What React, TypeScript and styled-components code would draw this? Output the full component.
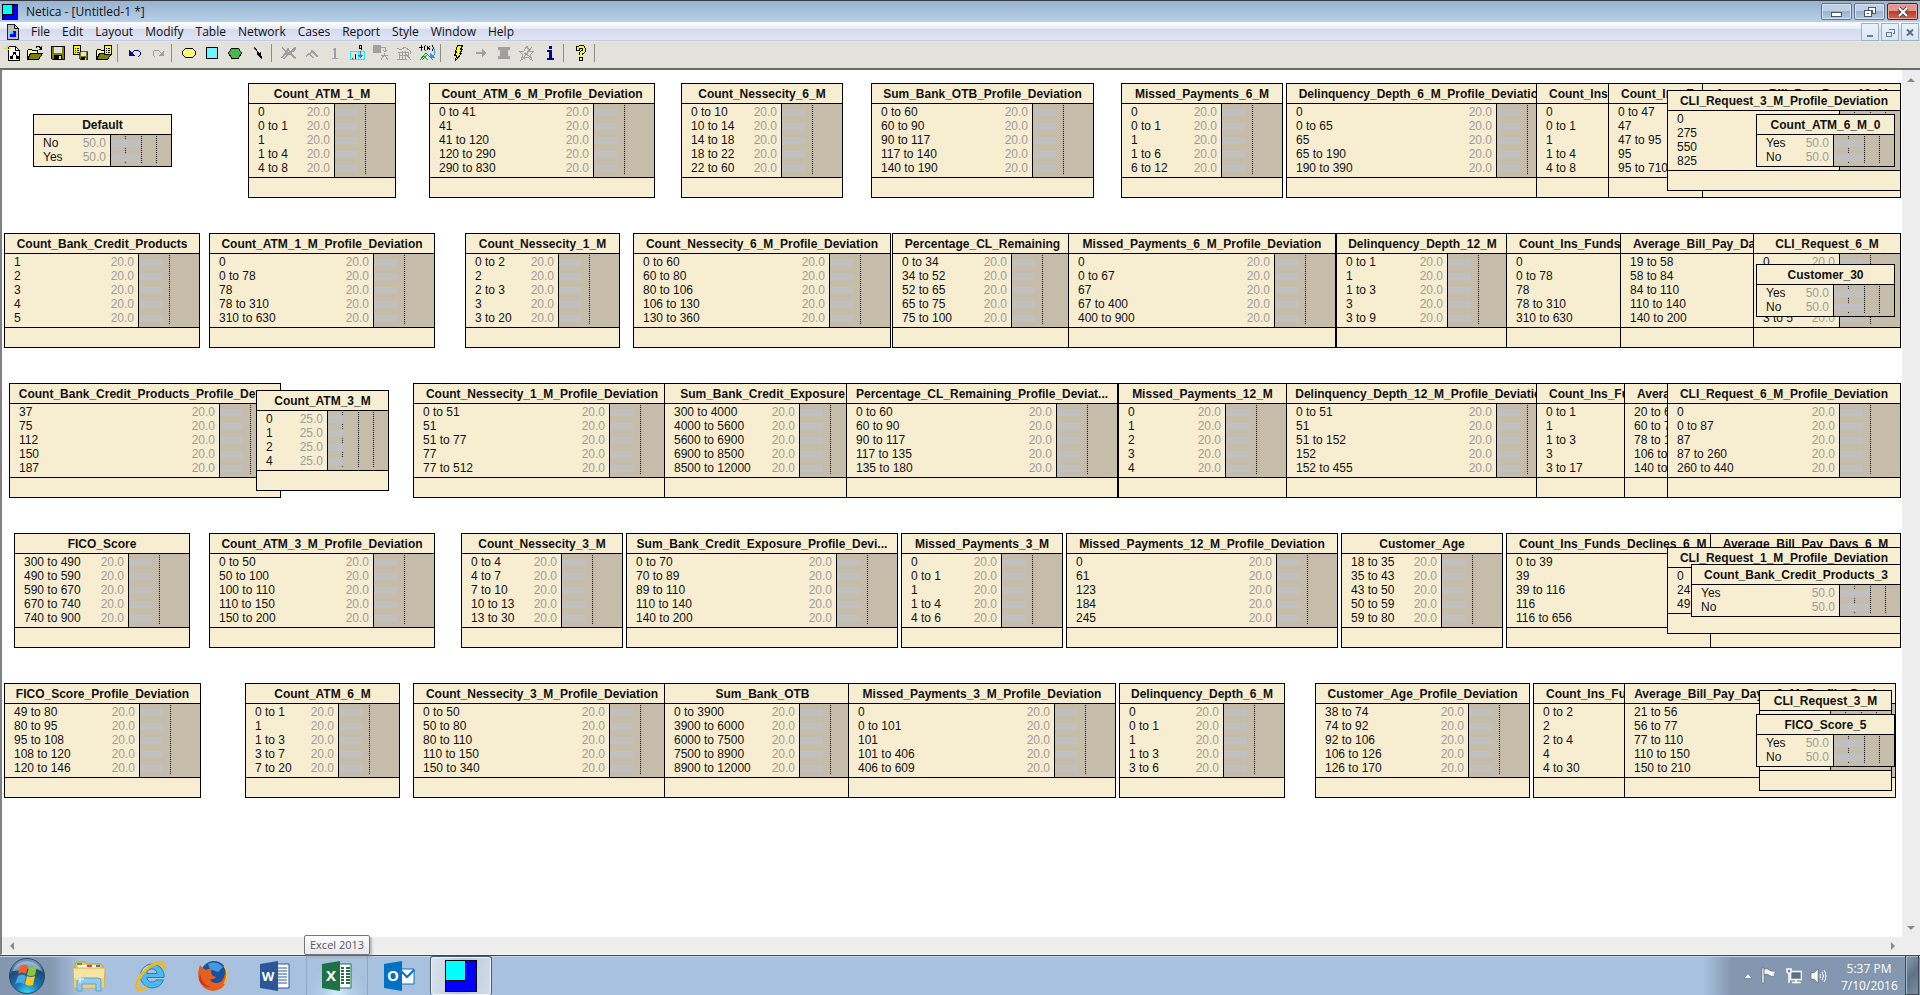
import React from 'react';
import styled, { createGlobalStyle, css } from 'styled-components';

const GlobalStyle = createGlobalStyle`
  * { box-sizing: border-box; }
  body { margin: 0; overflow: hidden; background: #fff; }
  button { font: inherit; color: inherit; padding: 0; border: 0; background: none; }
  svg { display: block; }
`;

const uiFont = css`
  font-family: 'Open Sans', 'Noto Sans', sans-serif;
  font-size: 12px;
  line-height: 16px;
`;

const Desktop = styled.div`
  ${uiFont}
  height: 100vh;
  display: flex;
  flex-direction: column;
  color: #111;
`;

/* ---------- title bar ---------- */

const TitleBar = styled.header`
  display: flex;
  align-items: center;
  height: 22px;
  padding: 0 2px;
  border-top: 1px solid #3a3d42;
  background: linear-gradient(#97b3d1, #b8d0e9);
`;

const WindowTitle = styled.h1`
  margin: 0 0 0 8px;
  flex: 1;
  font-size: 12px;
  font-weight: 400;
`;

const CaptionButtons = styled.div`
  display: flex;
  gap: 2px;
`;

const CaptionButton = styled.button<{ $danger?: boolean }>`
  width: 31px;
  height: 17px;
  display: grid;
  place-items: center;
  border: 1px solid ${p => (p.$danger ? '#5a1f24' : '#61758f')};
  border-radius: 2px;
  box-shadow: inset 0 0 0 1px ${p => (p.$danger ? '#e9a79b' : '#d3e1f0')};
  background: ${p =>
    p.$danger
      ? 'linear-gradient(#e0998c 50%, #bf3a20 50%, #cf6a4c)'
      : 'linear-gradient(#bfd0e4 50%, #9bb3cd 50%, #b4c9e0)'};
`;

/* ---------- menu bar ---------- */

const MenuBar = styled.nav`
  display: flex;
  align-items: center;
  height: 20px;
  padding: 0 1px 0 7px;
  background: linear-gradient(#fff, #e6eaf6 35%, #d5dbef 36%, #dfe5f6 88%, #b4bbdb 90%, #f4f5f9);
`;

const MenuItems = styled.div`
  display: flex;
  gap: 12px;
  margin-left: 12px;
  flex: 1;
`;

const MenuButton = styled.button``;

const MdiButtons = styled.div`
  display: flex;
  gap: 2px;
`;

const MdiButton = styled.button`
  width: 18px;
  height: 18px;
  display: grid;
  place-items: center;
  border: 1px solid #9db0c4;
  background: linear-gradient(#eaf3fb, #d6e6f5);
`;

/* ---------- toolbar ---------- */

const ToolBar = styled.div`
  display: flex;
  align-items: center;
  height: 28px;
  padding-bottom: 4px;
  border-bottom: 2px solid #6a6a6a;
  background: #e2e2db;
`;

const ToolButton = styled.button`
  width: 23px;
  height: 22px;
  display: grid;
  place-items: center;
`;

const ToolSeparator = styled.span`
  width: 8px;
  height: 18px;
  &::before {
    content: '';
    display: block;
    width: 1px;
    height: 18px;
    margin-left: 2px;
    background: #8c8c88;
  }
`;

/* ---------- network canvas ---------- */

const Workspace = styled.main`
  flex: 1;
  min-height: 0;
  display: grid;
  grid-template: minmax(0, 1fr) 17px / minmax(0, 1fr) 18px;
  border-left: 2px solid #808080;
  border-bottom: 1px solid #f5f5f5;
  position: relative;
`;

const Canvas = styled.div`
  position: relative;
  overflow: hidden;
  background: #fff;
  font-family: 'Liberation Sans', Arial, sans-serif;
  line-height: 14px;
`;

const ScrollTrack = styled.div<{ $vertical?: boolean }>`
  display: flex;
  flex-direction: ${p => (p.$vertical ? 'column' : 'row')};
  justify-content: space-between;
  align-items: center;
  padding: ${p => (p.$vertical ? '5px 0' : '0 5px')};
  background: #ededed;
`;

const ScrollCorner = styled.div`
  background: #ededed;
`;

const ScrollButton = styled.button`
  width: 9px;
  height: 9px;
  display: grid;
  place-items: center;
`;

const NodeBox = styled.section<{ $x: number; $y: number; $w: number }>`
  position: absolute;
  left: ${p => p.$x}px;
  top: ${p => p.$y}px;
  width: ${p => p.$w}px;
  border: 1px solid #000;
  background: #f7eed2;
`;

const NodeTitle = styled.h2<{ $start?: boolean }>`
  margin: 0;
  height: 20px;
  padding-left: ${p => (p.$start ? 12 : 0)}px;
  border-bottom: 1px solid #000;
  display: flex;
  justify-content: ${p => (p.$start ? 'flex-start' : 'center')};
  align-items: center;
  white-space: nowrap;
  font-size: 12px;
  font-weight: 700;
`;

const NodeBody = styled.div`
  display: flex;
`;

const StateTable = styled.table`
  flex: 1;
  border-collapse: collapse;
  margin: 1px 0 2px;
  font-size: 12px;

  tr { height: 14px; }
  th, td { padding: 0; font-weight: 400; white-space: nowrap; }
  th { padding-left: 9px; text-align: left; }
  td { padding-right: 4px; text-align: right; color: #9c9c9c; }
`;

const BeliefPanel = styled.div`
  position: relative;
  width: 61px;
  padding-top: 5px;
  display: flex;
  flex-direction: column;
  gap: 7px;
  border-left: 1px solid #000;
  background: #c5bda9;
`;

const BeliefBar = styled.div<{ $w: number }>`
  position: relative;
  width: ${p => p.$w}px;
  height: 7px;
  background: #c0c0c0;
`;

const ScaleMark = styled.span<{ $x: number }>`
  position: absolute;
  left: ${p => p.$x}px;
  top: 1px;
  bottom: 2px;
  width: 1px;
  background: repeating-linear-gradient(#000 0 1px, transparent 1px 2px);
`;

const NodeFooter = styled.div`
  height: 20px;
  border-top: 1px solid #000;
`;

/* 'compact' nodes have no footer; 'stacked' ones lie under others, with their beliefs out of view;
   'start' is a stacked node whose title begins at the left edge. */
type NodeKind = 'compact' | 'stacked' | 'start';
type NodeSpec = [x: number, y: number, w: number, title: string, states: string, kind?: NodeKind];

const ROW = [13, 163, 313, 463, 613];

const nodes: NodeSpec[] = [
  [31, 44, 139, 'Default', 'No|Yes', 'compact'],
  [246, ROW[0], 148, 'Count_ATM_1_M', '0|0 to 1|1|1 to 4|4 to 8'],
  [427, ROW[0], 226, 'Count_ATM_6_M_Profile_Deviation', '0 to 41|41|41 to 120|120 to 290|290 to 830'],
  [679, ROW[0], 162, 'Count_Nessecity_6_M', '0 to 10|10 to 14|14 to 18|18 to 22|22 to 60'],
  [869, ROW[0], 223, 'Sum_Bank_OTB_Profile_Deviation', '0 to 60|60 to 90|90 to 117|117 to 140|140 to 190'],
  [1119, ROW[0], 162, 'Missed_Payments_6_M', '0|0 to 1|1|1 to 6|6 to 12'],
  [1284, ROW[0], 272, 'Delinquency_Depth_6_M_Profile_Deviation', '0|0 to 65|65|65 to 190|190 to 390'],
  [1534, ROW[0], 212, 'Count_Ins_', '0|0 to 1|1|1 to 4|4 to 8', 'start'],
  [1606, ROW[0], 272, 'Count_Ins_F', '0 to 47|47|47 to 95|95|95 to 710', 'start'],
  [1700, ROW[0], 199, 'Average_Bill_Pay_Days_12_M', '||||', 'stacked'],
  [1665, 20, 234, 'CLI_Request_3_M_Profile_Deviation', '0|275|550|825', 'stacked'],
  [1754, 44, 139, 'Count_ATM_6_M_0', 'Yes|No', 'compact'],

  [2, ROW[1], 196, 'Count_Bank_Credit_Products', '1|2|3|4|5'],
  [207, ROW[1], 226, 'Count_ATM_1_M_Profile_Deviation', '0|0 to 78|78|78 to 310|310 to 630'],
  [463, ROW[1], 155, 'Count_Nessecity_1_M', '0 to 2|2|2 to 3|3|3 to 20'],
  [631, ROW[1], 258, 'Count_Nessecity_6_M_Profile_Deviation', '0 to 60|60 to 80|80 to 106|106 to 130|130 to 360'],
  [890, ROW[1], 181, 'Percentage_CL_Remaining', '0 to 34|34 to 52|52 to 65|65 to 75|75 to 100'],
  [1066, ROW[1], 268, 'Missed_Payments_6_M_Profile_Deviation', '0|0 to 67|67|67 to 400|400 to 900'],
  [1334, ROW[1], 173, 'Delinquency_Depth_12_M', '0 to 1|1|1 to 3|3|3 to 9'],
  [1504, ROW[1], 272, 'Count_Ins_Funds_', '0|0 to 78|78|78 to 310|310 to 630', 'start'],
  [1618, ROW[1], 272, 'Average_Bill_Pay_Da', '19 to 58|58 to 84|84 to 110|110 to 140|140 to 200', 'start'],
  [1751, ROW[1], 148, 'CLI_Request_6_M', '0||||3 to 5'],
  [1754, 194, 139, 'Customer_30', 'Yes|No', 'compact'],

  [7, ROW[2], 272, 'Count_Bank_Credit_Products_Profile_Dev...', '37|75|112|150|187'],
  [254, 320, 133, 'Count_ATM_3_M', '0|1|2|4'],
  [411, ROW[2], 258, 'Count_Nessecity_1_M_Profile_Deviation', '0 to 51|51|51 to 77|77|77 to 512'],
  [662, ROW[2], 197, 'Sum_Bank_Credit_Exposure', '300 to 4000|4000 to 5600|5600 to 6900|6900 to 8500|8500 to 12000'],
  [844, ROW[2], 272, 'Percentage_CL_Remaining_Profile_Deviat...', '0 to 60|60 to 90|90 to 117|117 to 135|135 to 180'],
  [1116, ROW[2], 169, 'Missed_Payments_12_M', '0|1|2|3|4'],
  [1284, ROW[2], 272, 'Delinquency_Depth_12_M_Profile_Deviation', '0 to 51|51|51 to 152|152|152 to 455'],
  [1534, ROW[2], 219, 'Count_Ins_Fu', '0 to 1|1|1 to 3|3|3 to 17', 'start'],
  [1622, ROW[2], 272, 'Avera', '20 to 6|60 to 7|78 to 1|106 to|140 to', 'start'],
  [1665, ROW[2], 234, 'CLI_Request_6_M_Profile_Deviation', '0|0 to 87|87|87 to 260|260 to 440'],

  [12, ROW[3], 176, 'FICO_Score', '300 to 490|490 to 590|590 to 670|670 to 740|740 to 900'],
  [207, ROW[3], 226, 'Count_ATM_3_M_Profile_Deviation', '0 to 50|50 to 100|100 to 110|110 to 150|150 to 200'],
  [459, ROW[3], 162, 'Count_Nessecity_3_M', '0 to 4|4 to 7|7 to 10|10 to 13|13 to 30'],
  [624, ROW[3], 272, 'Sum_Bank_Credit_Exposure_Profile_Devi...', '0 to 70|70 to 89|89 to 110|110 to 140|140 to 200'],
  [899, ROW[3], 162, 'Missed_Payments_3_M', '0|0 to 1|1|1 to 4|4 to 6'],
  [1064, ROW[3], 272, 'Missed_Payments_12_M_Profile_Deviation', '0|61|123|184|245'],
  [1339, ROW[3], 162, 'Customer_Age', '18 to 35|35 to 43|43 to 50|50 to 59|59 to 80'],
  [1504, ROW[3], 272, 'Count_Ins_Funds_Declines_6_M', '0 to 39|39|39 to 116|116|116 to 656', 'start'],
  [1708, ROW[3], 191, 'Average_Bill_Pay_Days_6_M', '||||', 'stacked'],
  [1665, 477, 234, 'CLI_Request_1_M_Profile_Deviation', '0|24|49', 'stacked'],
  [1689, 494, 210, 'Count_Bank_Credit_Products_3', 'Yes|No', 'compact'],

  [2, ROW[4], 197, 'FICO_Score_Profile_Deviation', '49 to 80|80 to 95|95 to 108|108 to 120|120 to 146'],
  [243, ROW[4], 155, 'Count_ATM_6_M', '0 to 1|1|1 to 3|3 to 7|7 to 20'],
  [411, ROW[4], 258, 'Count_Nessecity_3_M_Profile_Deviation', '0 to 50|50 to 80|80 to 110|110 to 150|150 to 340'],
  [662, ROW[4], 197, 'Sum_Bank_OTB', '0 to 3900|3900 to 6000|6000 to 7500|7500 to 8900|8900 to 12000'],
  [846, ROW[4], 268, 'Missed_Payments_3_M_Profile_Deviation', '0|0 to 101|101|101 to 406|406 to 609'],
  [1117, ROW[4], 166, 'Delinquency_Depth_6_M', '0|0 to 1|1|1 to 3|3 to 6'],
  [1313, ROW[4], 215, 'Customer_Age_Profile_Deviation', '38 to 74|74 to 92|92 to 106|106 to 126|126 to 170'],
  [1531, ROW[4], 212, 'Count_Ins_Fu', '0 to 2|2|2 to 4|4|4 to 30', 'start'],
  [1622, ROW[4], 272, 'Average_Bill_Pay_Days_3_M_Profile_Devi...', '21 to 56|56 to 77|77 to 110|110 to 150|150 to 210', 'stacked'],
  [1757, 620, 133, 'CLI_Request_3_M', '|||'],
  [1754, 644, 139, 'FICO_Score_5', 'Yes|No', 'compact'],
];

const barWidths: Record<number, number> = { 2: 30, 3: 20, 4: 15, 5: 23 };

function BeliefNode({ spec }: { spec: NodeSpec }) {
  const [x, y, w, title, stateList, kind] = spec;
  const states = stateList.split('|');
  const percent = (100 / states.length).toFixed(1);
  const marks = states.length === 5 ? [30] : [14, 30, 45];
  const stacked = kind === 'stacked' || kind === 'start';
  return (
    <NodeBox $x={x} $y={y} $w={w}>
      <NodeTitle $start={kind === 'start'}>{title}</NodeTitle>
      <NodeBody>
        <StateTable>
          <tbody>
            {states.map((s, i) => (
              <tr key={i}>
                <th scope="row">{s}</th>
                <td>{s && !stacked ? percent : null}</td>
              </tr>
            ))}
          </tbody>
        </StateTable>
        <BeliefPanel>
          {marks.map(m => <ScaleMark key={m} $x={m} />)}
          {states.map((_, i) => <BeliefBar key={i} $w={barWidths[states.length]} />)}
        </BeliefPanel>
      </NodeBody>
      {kind !== 'compact' && <NodeFooter />}
    </NodeBox>
  );
}

/* ---------- toolbar icons, 16 x 16 ---------- */

const Icon = ({ children, w = 16, h = 16 }: { children: React.ReactNode; w?: number; h?: number }) => (
  <svg width={w} height={h} viewBox={`0 0 ${w} ${h}`} shapeRendering="crispEdges" fill="none" aria-hidden="true">
    {children}
  </svg>
);

const NeticaLogo = ({ size }: { size: number }) => (
  <svg width={size} height={size} viewBox="0 0 32 32" shapeRendering="crispEdges" aria-hidden="true">
    <rect width="32" height="32" fill="#000" />
    <rect x="1" y="1" width="30" height="30" fill="#00f" />
    <rect x="1" y="1" width="20" height="20" fill="#000" />
    <rect x="1" y="1" width="19" height="19" fill="#0ff" />
  </svg>
);

const DocIcon = () => (
  <Icon w={12}>
    <path d="M.5 .5h7l4 4v11H.5z" fill="#c0c0c0" stroke="#222" />
    <path d="M7.500 .5v4h4" stroke="#222" />
    <rect x="3" y="7" width="6" height="6" fill="#00f" />
    <rect x="3" y="7" width="3" height="3" fill="#0ff" />
  </Icon>
);

const folder = (
  <>
    <path d="M.5 14V5.500l1-1h3l1 1h5v3" fill="#ffffa0" stroke="#000" />
    <path d="M.5 14.500l3-6h12l-4 6z" fill="#808000" stroke="#000" />
  </>
);

const NewIcon = () => (
  <Icon>
    <path d="M4.500 1.500h7l4 4v10h-11z" fill="#fff" stroke="#000" />
    <path d="M11.500 1.500v4h4" stroke="#000" />
    <path d="M9 7h3v2H9zM9 9h1v1H9zM11 9h1v1h-1zM8 10h1v1H8zM12 10h1v1h-1zM6 11h3v3H6zM12 11h3v3h-3z" fill="#000" />
    <path d="M3 0v2M0 3h2M5 3h2M1 1l4 4M5 1L1 5M3 4v3" stroke="#e0e040" />
  </Icon>
);

const OpenIcon = () => (
  <Icon>
    {folder}
    <path d="M9 2.500l1-1h2l2 2M14.500 1v3h-3" stroke="#000" />
  </Icon>
);

const Floppy = () => (
  <>
    <path d="M1.500 1.500h13v13h-12l-1-1z" fill="#808000" stroke="#000" />
    <rect x="4" y="2" width="8" height="6" fill="#e2e2db" />
    <rect x="4" y="10" width="8" height="5" fill="#000" />
    <rect x="9" y="11" width="2" height="3" fill="#e2e2db" />
  </>
);

const SaveIcon = () => <Icon><Floppy /></Icon>;

const sheet = (
  <>
    <path d="M.5 .5h7v9h-7z" fill="#ff0" stroke="#000" />
    <path d="M2 3h1M4 3h2M2 5h1M4 5h2M2 7h1M4 7h2" stroke="#000" />
  </>
);

const SaveCasesIcon = () => (
  <Icon>
    {sheet}
    <g transform="translate(6 6) scale(.62)"><Floppy /></g>
  </Icon>
);

const OpenCasesIcon = () => (
  <Icon>
    {folder}
    <g transform="translate(8 0)">{sheet}</g>
  </Icon>
);

const UndoIcon = ({ redo }: { redo?: boolean }) => {
  const ink = redo ? '#a0a0a0' : '#000090';
  return (
    <Icon>
      <g transform={redo ? 'translate(16 0) scale(-1 1)' : undefined}>
        <path d="M4 9l4-4h3l2 2v3l-2 2" stroke={ink} />
        <path d="M2 5v6h6z" fill={ink} />
      </g>
    </Icon>
  );
};

const EllipseIcon = () => (
  <Icon><ellipse cx="8" cy="8" rx="6.500" ry="5" fill="#ffff70" stroke="#000" /></Icon>
);
const SquareIcon = () => (
  <Icon><path d="M2.500 2.500h11v11h-11z" fill="#70f4ff" stroke="#000" /></Icon>
);
const HexagonIcon = () => (
  <Icon><path d="M4.500 3.500h7l3 4.500-3 5h-7L1.500 8z" fill="#40bc48" stroke="#000" /></Icon>
);
const LinkIcon = () => (
  <Icon>
    <path d="M4 2l6 8" stroke="#000" />
    <path d="M6 9l5-2 1 8z" fill="#000" />
  </Icon>
);

const GREY = '#a0a0a0';
const NoCompileIcon = () => (
  <Icon><path d="M1 13l6-9 6 9M4 9h7M1 3l14 10M14 2L3 14M15 4l-11 8" stroke={GREY} strokeWidth="1.500" /></Icon>
);
const CaretIcon = () => (
  <Icon><path d="M8 5v3M8 6l6 6M8 7l-6 4M6 9l3 4" stroke={GREY} strokeWidth="1.500" /></Icon>
);
const OneIcon = () => (
  <Icon><path d="M5 5l2-2h2v10h2v1H5v-1h2V5z" fill={GREY} /></Icon>
);
const EnterTableIcon = () => (
  <Icon>
    <path d="M.5 6.500h14v8h-14zM8 7v7" stroke="#20e8f0" />
    <path d="M2 13h1M5.500 9v5M9.500 .5h2v3h-2zM11.500 3v2" stroke="#000" />
    <path d="M10 6h1v4h2l-2.500 3L8 10h2z" fill="#2080f0" />
  </Icon>
);
const AbsorbIcon = () => (
  <Icon>
    <rect x="0" y="0" width="8" height="8" fill={GREY} />
    <path d="M8 2h4v4M10 5l2 2 2-2M12 8l-4 7M11 9l4 6M8 10h7" stroke={GREY} />
  </Icon>
);
const HistogramIcon = () => (
  <Icon><path d="M1 3l4 2 4-3 5 4v3M2 7h11M3 7v7M6 6v8M9 6v8M12 7v5M1 14h10M9 8l6 7M3 10h9" stroke={GREY} /></Icon>
);
const FunctionIcon = () => (
  <Icon>
    <path d="M3 .5h-1v5M0 2.500h4M6.500 0l-1 2v2l1 2M8 1l3 4M11 1l-3 4M13 0l1 2v2l-1 2" stroke="#000" />
    <path d="M1 15l6-7 7 7M5 11l4 4M9 9l-6 6" stroke="#00b020" />
    <path d="M15 4v6l-2 2" stroke="#3090ff" />
    <path d="M11 8v5h5z" fill="#3090ff" />
  </Icon>
);
const BoltIcon = () => (
  <Icon><path d="M7.500 .5h5l-2 4h2l-3 4h2L5.500 15.500l1-5h-2l2-4h-1z" fill="#ff0" stroke="#000" /></Icon>
);
const ArrowIcon = () => (
  <Icon><path d="M3 7h6V4l5 4-5 4V9H3z" fill={GREY} /></Icon>
);
const ScrollIcon = () => (
  <Icon><path d="M2 2h12v3h-2v6h2v3H2v-3h2V5H2z" fill={GREY} /></Icon>
);
const StarIcon = () => (
  <Icon><path d="M8 1l2 5h5l-4 4 2 5-5-3-6 3 2-5-4-4h5zM4 14l9-12M5 8l7 4M10 5l-4 6" stroke={GREY} /></Icon>
);
const InfoIcon = () => (
  <Icon><path d="M7 1h3v3H7zM5 5h5v8h2v2H5v-2h2V7H5z" fill="#000090" /></Icon>
);
const HelpIcon = () => (
  <Icon>
    <path d="M5 6V3l2-1h3l1 2v2l-3 2v2" stroke="#000" strokeWidth="4" />
    <path d="M5 5V3l2-1h3l1 2v2l-3 2v2" stroke="#ff0" strokeWidth="2" />
    <path d="M6.500 12.500h3v3h-3z" fill="#ff0" stroke="#000" />
  </Icon>
);

const toolGroups: [string, () => React.JSX.Element][][] = [
  [['New', NewIcon], ['Open', OpenIcon], ['Save', SaveIcon], ['Save cases', SaveCasesIcon], ['Open cases', OpenCasesIcon]],
  [['Undo', () => <UndoIcon />], ['Redo', () => <UndoIcon redo />]],
  [['Nature node', EllipseIcon], ['Decision node', SquareIcon], ['Utility node', HexagonIcon], ['Link', LinkIcon]],
  [
    ['Remove', NoCompileIcon], ['Reverse', CaretIcon], ['One', OneIcon], ['Table', EnterTableIcon],
    ['Absorb', AbsorbIcon], ['Histogram', HistogramIcon], ['Equation', FunctionIcon],
  ],
  [['Compile', BoltIcon], ['Go', ArrowIcon], ['Script', ScrollIcon], ['Optimize', StarIcon], ['Info', InfoIcon]],
  [['Help', HelpIcon]],
];

const menus = ['File', 'Edit', 'Layout', 'Modify', 'Table', 'Network', 'Cases', 'Report', 'Style', 'Window', 'Help'];

/* ---------- window button glyphs ---------- */

const MinimizeGlyph = () => (
  <Icon w={12} h={12}><rect x=".5" y="6.500" width="10" height="4" fill="#fff" stroke="#4a5568" /></Icon>
);
const RestoreGlyph = () => (
  <Icon w={12} h={12}>
    <path d="M4.500 1.500h7v6h-3v-3h-4z" fill="#fff" stroke="#4a5568" />
    <path d="M.5 4.500h7v6h-7z" fill="#fff" stroke="#4a5568" />
    <path d="M3 7h2v1H3z" fill="#4a5568" />
  </Icon>
);
const CloseGlyph = () => (
  <svg width="12" height="10" viewBox="0 0 12 10" aria-hidden="true">
    <path d="M2 1l8 8M10 1L2 9" stroke="#4a4654" strokeWidth="4" />
    <path d="M2 1l8 8M10 1L2 9" stroke="#fff" strokeWidth="2" />
  </svg>
);

const SmallMinimize = () => <Icon w={9} h={9}><rect x="1" y="7" width="6" height="2" fill="#6b7f95" /></Icon>;
const SmallRestore = () => (
  <Icon w={9} h={9}><path d="M3 1.500h5.500v4h-2M.5 4h5v4h-5zM.5 4.500h5" stroke="#6b7f95" /></Icon>
);
const SmallClose = () => (
  <svg width="9" height="9" viewBox="0 0 9 9" aria-hidden="true"><path d="M1 1.500l6 6M7 1.500l-6 6" stroke="#5c6f85" strokeWidth="2" /></svg>
);

const Triangle = ({ d }: { d: string }) => (
  <svg width="8" height="8" viewBox="0 0 8 8" aria-hidden="true"><path d={d} fill="#8a8a8a" /></svg>
);

/* ---------- taskbar ---------- */

const TaskBar = styled.footer`
  display: flex;
  align-items: stretch;
  height: 40px;
  border-top: 1px solid #3f4a58;
  box-shadow: inset 0 1px 0 #c3d5e8;
  background: linear-gradient(90deg, #8397b0 0, #8397b0 50px, #a7c1de 80px, #a7c1de calc(100% - 216px), #8397b0 calc(100% - 188px), #8397b0);
`;

const TaskButton = styled.button<{ $state?: 'active' | 'hover' }>`
  width: 62px;
  display: grid;
  place-items: center;
  ${p => p.$state === 'hover' && css`
    border-left: 1px solid #8ea9c8;
    border-right: 1px solid #8ea9c8;
    background: radial-gradient(circle at 50% 100%, #d4efff 0, #b4cde8 14px, transparent 30px);
  `}
  ${p => p.$state === 'active' && css`
    border: 1px solid #4a5c72;
    border-bottom: 0;
    border-radius: 3px;
    box-shadow: inset 0 0 0 1px #eef4fa;
    background: linear-gradient(100deg, #dce5ee, #b8c8dc 50%, #d2dde9);
  `}
`;

const StartButton = styled.button`
  width: 54px;
  display: grid;
  place-items: center;
  margin-right: 4px;
`;

const TaskSpacer = styled.div`
  flex: 1;
`;

const Tray = styled.div`
  display: flex;
  align-items: center;
  gap: 8px;
  margin-right: 14px;
`;

const Clock = styled.time`
  width: 56px;
  margin-right: 8px;
  padding-top: 4px;
  color: #fff;
  text-align: center;
  font-size: 12px;
  line-height: 17px;
`;

const ShowDesktop = styled.button`
  width: 14px;
  margin-right: 1px;
  border: 1px solid #3f4a58;
  border-top: 0;
  box-shadow: inset 1px 1px 0 #a9b8c9;
  background: linear-gradient(135deg, #8b9cb0, #5f7186 50%, #7a8da4);
`;

const TaskTip = styled.div`
  position: absolute;
  left: 302px;
  bottom: -1px;
  padding: 1px 5px;
  border: 1px solid #767676;
  border-radius: 2px;
  box-shadow: 2px 2px 2px #8888;
  background: linear-gradient(#fff, #e6e7f1);
  color: #575757;
  font-size: 11px;
  line-height: 16px;
  white-space: nowrap;
`;

const StartOrb = () => (
  <svg width="38" height="38" viewBox="0 0 38 38" aria-hidden="true">
    <defs>
      <radialGradient id="orb" cx=".5" cy="1" r=".9">
        <stop offset="0" stopColor="#36e0ff" />
        <stop offset=".4" stopColor="#1c78b4" />
        <stop offset=".8" stopColor="#1d4a78" />
        <stop offset="1" stopColor="#6f93b8" />
      </radialGradient>
    </defs>
    <circle cx="19" cy="19" r="17.500" fill="url(#orb)" stroke="#2a4766" />
    <path d="M4 14a16 15 0 0 1 30 0q-8-4-15-2t-15 2z" fill="#c9dbea" opacity=".55" />
    <path d="M12 9q4-3 8 0l-2 8q-4-3-8 0z" fill="#f0602c" />
    <path d="M21 10q4 2 8-1l-2 9q-4 2-8 0z" fill="#8cc63e" />
    <path d="M10 19q4-3 8 0l-2 8q-4-3-9 0z" fill="#48a8e8" />
    <path d="M19 19q4 2 8 0l-2 9q-5 2-8-1z" fill="#fcc81e" />
  </svg>
);

const ExplorerIcon = () => (
  <svg width="34" height="32" viewBox="0 0 34 32" aria-hidden="true">
    <path d="M3 4l2-2h8l2 2h14l2 2v20H3z" fill="#e9c867" stroke="#c39c3c" />
    <path d="M6 5h22v3H6z" fill="#fff" />
    <path d="M5 3h5v2H5z" fill="#2eb344" /><path d="M15 5h5v2h-5z" fill="#e23c2c" /><path d="M24 5h4v2h-4z" fill="#2e78d2" />
    <path d="M1 8h32v2l-1 18H2z" fill="#f7e4a0" stroke="#d2ae55" />
    <path d="M2 18h30v9H2z" fill="#f0d078" />
    <path d="M5 31V21q0-3 3-3h18q3 0 3 3v10h-5v-7H10v7z" fill="#8fcdf0" stroke="#5aa3cf" />
    <path d="M8 15v8M4 19h8" stroke="#fff" />
  </svg>
);

const IeIcon = () => (
  <svg width="32" height="32" viewBox="0 0 32 32" aria-hidden="true">
    <path d="M17 4a12 12 0 1 0 11.500 16h-7a5.500 5.500 0 0 1-9.800-2.500H29A12 12 0 0 0 17 4zm-5.300 9.500a5.200 5.200 0 0 1 10.300 0z" fill="#4fb8ee" stroke="#2380be" />
    <path d="M15 6a10 10 0 0 0-8 9" stroke="#c4ecff" strokeWidth="2" fill="none" />
    <path d="M29 9q1-7-5-6-9 1-17 11-8 11-4 15 3 2 9-2" fill="none" stroke="#f3b81a" strokeWidth="3" />
  </svg>
);

const FirefoxIcon = () => (
  <svg width="32" height="32" viewBox="0 0 32 32" aria-hidden="true">
    <circle cx="17" cy="14" r="13" fill="#1c4f9c" />
    <path d="M11 4q8-4 15 3l-5 5-8-3z" fill="#3f9ae0" />
    <path d="M3 5q-3 8-1 15 3 10 14 11 12-1 14-13 1-6-2-10 1 5-1 9-2 6-8 6-5 0-6-4 4 1 6-2-5-1-5-5 0-2 2-3-5-1-7 1-3-1-6-5z" fill="#e5601c" />
    <path d="M27 6q6 10 0 18 6-12 0-18z" fill="#ffd33a" stroke="#ffc42a" />
    <path d="M3 12q0 12 11 15-8 1-12-7z" fill="#c9301a" />
  </svg>
);

const officeText = { fill: '#fff', fontFamily: 'Open Sans, sans-serif', fontWeight: 700, fontSize: 15, textAnchor: 'middle' as const };

const WordIcon = () => (
  <svg width="32" height="32" viewBox="0 0 32 32" aria-hidden="true">
    <path d="M17 4h13v24H17z" fill="#fff" stroke="#2b579a" />
    <path d="M19 8h9M19 11h9M19 14h9M19 17h9M19 20h9M19 23h9" stroke="#2b579a" />
    <path d="M1 4l18-3v30L1 28z" fill="#2b579a" />
    <text x="9" y="21" {...officeText} fontSize={13}>W</text>
  </svg>
);

const ExcelIcon = () => (
  <svg width="32" height="32" viewBox="0 0 32 32" aria-hidden="true">
    <path d="M17 4h13v24H17z" fill="#fff" stroke="#1e7145" />
    <path d="M20 8h3M25 8h4M20 11h3M25 11h4M20 14h3M25 14h4M20 17h3M25 17h4M20 20h3M25 20h4M20 23h3M25 23h4" stroke="#1e7145" strokeWidth="2" />
    <path d="M1 4l18-3v30L1 28z" fill="#1e7145" />
    <text x="10" y="21" {...officeText}>X</text>
  </svg>
);

const OutlookIcon = () => (
  <svg width="32" height="32" viewBox="0 0 32 32" aria-hidden="true">
    <path d="M17 9h14v15H17z" fill="#fff" stroke="#0072c6" />
    <path d="M18 11l6 6 7-7" stroke="#0072c6" strokeWidth="2" fill="none" />
    <path d="M1 4l18-3v30L1 28z" fill="#0072c6" />
    <text x="10" y="21" {...officeText}>O</text>
  </svg>
);

const TrayArrow = () => (
  <svg width="10" height="6" viewBox="0 0 10 6" aria-hidden="true"><path d="M1 5.500l4-5 4 5z" fill="#eef2f6" stroke="#4f6075" strokeWidth=".5" /></svg>
);
const FlagIcon = () => (
  <svg width="17" height="17" viewBox="0 0 17 17" aria-hidden="true">
    <path d="M1 1h2v15H1zM3 2q3-1 5 1t7 1l-2 3 1 2q-4 1-6-1T3 8z" fill="#fff" stroke="#40516a" strokeWidth=".5" />
  </svg>
);
const NetworkIcon = () => (
  <svg width="16" height="16" viewBox="0 0 16 16" aria-hidden="true">
    <path d="M4.500 3.500h11v8h-11z" fill="#5c7089" stroke="#fff" strokeWidth="1.500" />
    <path d="M6 14.500h9M10 12v2" stroke="#fff" strokeWidth="1.500" />
    <path d="M1 1v3l2 2 2-2V1zM3 6v9" stroke="#fff" fill="#6c8099" strokeWidth="1.500" />
  </svg>
);
const SpeakerIcon = () => (
  <svg width="17" height="16" viewBox="0 0 17 16" aria-hidden="true">
    <path d="M1 5h3l4-4v14l-4-4H1z" fill="#fff" stroke="#40516a" strokeWidth=".5" />
    <path d="M10 6q1 2 0 4M12 4q3 4 0 8M14 2q4 6 0 12" stroke="#fff" fill="none" />
  </svg>
);

export default function App() {
  return (
    <Desktop>
      <GlobalStyle />
      <TitleBar>
        <NeticaLogo size={16} />
        <WindowTitle>Netica - [Untitled-1 *]</WindowTitle>
        <CaptionButtons>
          <CaptionButton aria-label="Minimize"><MinimizeGlyph /></CaptionButton>
          <CaptionButton aria-label="Restore"><RestoreGlyph /></CaptionButton>
          <CaptionButton $danger aria-label="Close"><CloseGlyph /></CaptionButton>
        </CaptionButtons>
      </TitleBar>

      <MenuBar>
        <DocIcon />
        <MenuItems>
          {menus.map(m => <MenuButton key={m}>{m}</MenuButton>)}
        </MenuItems>
        <MdiButtons>
          <MdiButton aria-label="Minimize document"><SmallMinimize /></MdiButton>
          <MdiButton aria-label="Restore document"><SmallRestore /></MdiButton>
          <MdiButton aria-label="Close document"><SmallClose /></MdiButton>
        </MdiButtons>
      </MenuBar>

      <ToolBar role="toolbar">
        {toolGroups.map((group, i) => (
          <React.Fragment key={i}>
            {group.map(([label, Glyph]) => (
              <ToolButton key={label} aria-label={label}><Glyph /></ToolButton>
            ))}
            <ToolSeparator />
          </React.Fragment>
        ))}
      </ToolBar>

      <Workspace>
        <Canvas>
          {nodes.map((spec, i) => <BeliefNode key={i} spec={spec} />)}
        </Canvas>
        <ScrollTrack $vertical>
          <ScrollButton aria-label="Scroll up"><Triangle d="M0 6l4-4 4 4z" /></ScrollButton>
          <ScrollButton aria-label="Scroll down"><Triangle d="M0 2l4 4 4-4z" /></ScrollButton>
        </ScrollTrack>
        <ScrollTrack>
          <ScrollButton aria-label="Scroll left"><Triangle d="M6 0L2 4l4 4z" /></ScrollButton>
          <ScrollButton aria-label="Scroll right"><Triangle d="M2 0l4 4-4 4z" /></ScrollButton>
        </ScrollTrack>
        <ScrollCorner />
        <TaskTip role="tooltip">Excel 2013</TaskTip>
      </Workspace>

      <TaskBar>
        <StartButton aria-label="Start"><StartOrb /></StartButton>
        <TaskButton aria-label="File Explorer"><ExplorerIcon /></TaskButton>
        <TaskButton aria-label="Internet Explorer"><IeIcon /></TaskButton>
        <TaskButton aria-label="Firefox"><FirefoxIcon /></TaskButton>
        <TaskButton aria-label="Word 2013"><WordIcon /></TaskButton>
        <TaskButton $state="hover" aria-label="Excel 2013"><ExcelIcon /></TaskButton>
        <TaskButton aria-label="Outlook 2013"><OutlookIcon /></TaskButton>
        <TaskButton $state="active" aria-label="Netica"><NeticaLogo size={32} /></TaskButton>
        <TaskSpacer />
        <Tray>
          <TrayArrow />
          <FlagIcon />
          <NetworkIcon />
          <SpeakerIcon />
        </Tray>
        <Clock>5:37 PM<br />7/10/2016</Clock>
        <ShowDesktop aria-label="Show desktop" />
      </TaskBar>
    </Desktop>
  );
}
